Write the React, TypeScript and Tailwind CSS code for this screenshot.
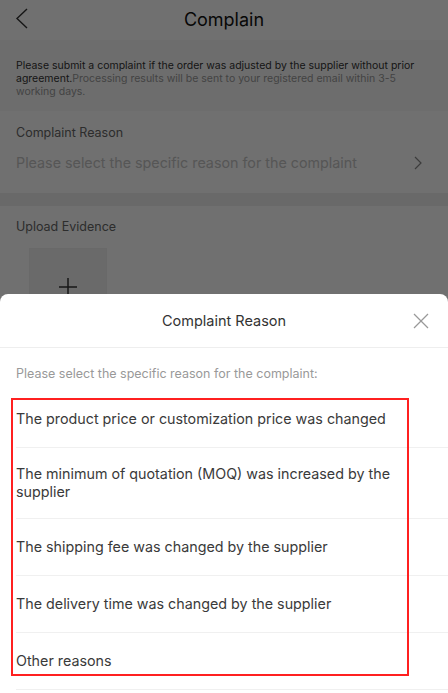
import React from "react";

const reasons: string[] = [
  "The product price or customization price was changed",
  "The minimum of quotation (MOQ) was increased by the supplier",
  "The shipping fee was changed by the supplier",
  "The delivery time was changed by the supplier",
  "Other reasons",
];

export default function App() {
  return (
    <div
      className="relative w-[448px] h-[693px] overflow-hidden bg-white"
      style={{ fontFamily: 'Inter, "Liberation Sans", Arial, sans-serif' }}
    >
      {/* Underlying page */}
      <div className="flex flex-col">
        <div className="relative h-[40px] flex items-center justify-center">
          <svg
            className="absolute left-[14px] top-[8px]"
            width="16"
            height="22"
            viewBox="0 0 16 22"
          >
            <polyline
              points="13,1 3,10.5 13,20"
              fill="none"
              stroke="#333"
              strokeWidth="1.4"
            />
          </svg>
          <span className="text-[18px] text-[#111] leading-none">Complain</span>
        </div>
        <div className="h-[71px] px-4 pt-[19px] text-[10.5px] leading-[13px] bg-[#f8f8f8]">
          <span className="text-[#333]">
            Please submit a complaint if the order was adjusted by the supplier without prior
            agreement.
          </span>
          <span className="text-[#999]">
            Processing results will be sent to your registered email within 3-5 working days.
          </span>
        </div>
        <div className="h-[82px] px-4 pt-[14px] flex flex-col">
          <span className="text-[12.5px] leading-[16px] text-[#666]">Complaint Reason</span>
          <div className="mt-[13px] flex items-center justify-between">
            <span className="text-[14.3px] leading-[18px] text-[#c4c4c4]">
              Please select the specific reason for the complaint
            </span>
            <svg width="10" height="14" viewBox="0 0 10 14" className="mr-[9px]">
              <polyline points="2,1 8,7 2,13" fill="none" stroke="#888" strokeWidth="1.2" />
            </svg>
          </div>
        </div>
        <div className="h-[13px] bg-[#f0f0f0]" />
        <div className="px-4 pt-[13px]">
          <div className="text-[12.5px] leading-[16px] text-[#666]">Upload Evidence</div>
          <div className="mt-[13px] ml-[13px] w-[78px] h-[78px] border border-[#eee] bg-[#f2f2f2] flex items-center justify-center">
            <svg width="18" height="18" viewBox="0 0 18 18">
              <line x1="9" y1="0" x2="9" y2="18" stroke="#333" strokeWidth="1.5" />
              <line x1="0" y1="9" x2="18" y2="9" stroke="#333" strokeWidth="1.5" />
            </svg>
          </div>
        </div>
      </div>

      {/* Mask */}
      <div className="absolute inset-0 bg-black/[0.56]" />

      {/* Bottom sheet */}
      <div className="absolute left-0 right-0 top-[294px] bottom-0 bg-white rounded-t-[8px] flex flex-col">
        <div className="relative h-[54px] flex items-center justify-center border-b border-[#eee]">
          <span className="text-[14.5px] text-[#333]">Complaint Reason</span>
          <svg
            className="absolute right-[19px] top-[19px]"
            width="16"
            height="16"
            viewBox="0 0 16 16"
          >
            <line x1="1" y1="1" x2="15" y2="15" stroke="#999" strokeWidth="1.3" />
            <line x1="15" y1="1" x2="1" y2="15" stroke="#999" strokeWidth="1.3" />
          </svg>
        </div>
        <div className="pl-4 pt-[18px] pb-[9px] text-[12.5px] leading-[16px] text-[#999]">
          Please select the specific reason for the complaint:
        </div>
        <div className="pl-4 flex flex-col">
          {reasons.map((r) => (
            <div
              key={r}
              className="min-h-[57px] py-[17px] pr-[40px] flex items-center border-b border-[#f0f0f0] text-[14.3px] leading-[18px] text-[#3a3a3a]"
            >
              {r}
            </div>
          ))}
        </div>
      </div>

      {/* Highlight annotation */}
      <div className="absolute left-[11px] top-[398px] w-[398px] h-[278px] border-2 border-[#ff2020]" />
    </div>
  );
}
